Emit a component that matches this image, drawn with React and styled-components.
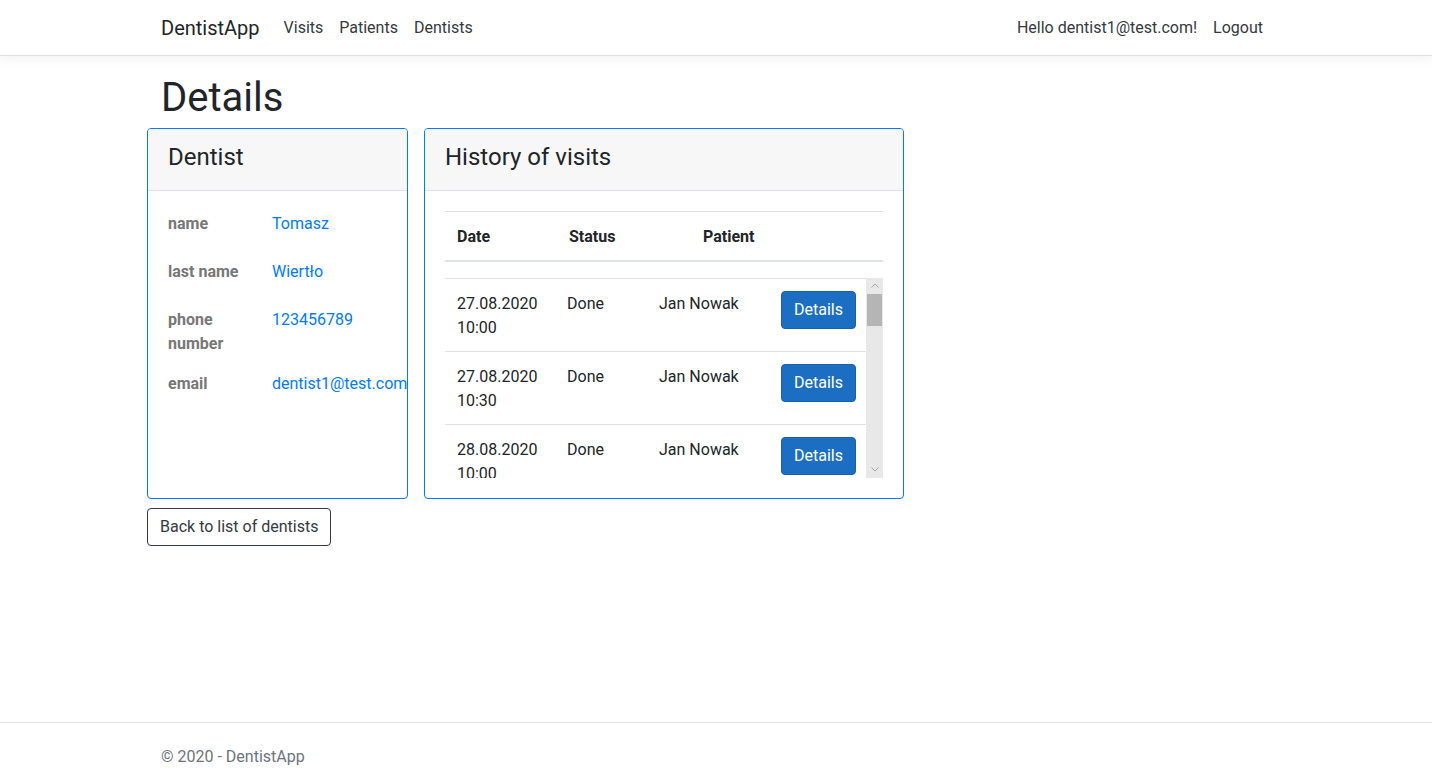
import React from 'react'
import styled, { createGlobalStyle } from 'styled-components'

const GlobalStyle = createGlobalStyle`
  html, body {
    margin: 0;
    padding: 0;
  }
  body {
    font-family: "Segoe UI", Roboto, "Noto Sans", sans-serif;
    font-size: 16px;
    line-height: 1.5;
    color: #212529;
    background: #ffffff;
  }
  * {
    box-sizing: border-box;
  }
`

const Page = styled.div`
  min-height: 100vh;
  display: flex;
  flex-direction: column;
`

const Navbar = styled.header`
  height: 56px;
  background: #ffffff;
  border-bottom: 1px solid #dee2e6;
  box-shadow: 0 4px 12px rgba(0, 0, 0, 0.05);
  margin-bottom: 16px;
`

const Container = styled.div`
  width: 1140px;
  margin: 0 auto;
  padding: 0 15px;
`

const NavInner = styled(Container)`
  height: 100%;
  display: flex;
  align-items: center;
`

const Brand = styled.a`
  font-size: 20px;
  line-height: 30px;
  color: #212529;
  margin-right: 16px;
  text-decoration: none;
`

const NavList = styled.nav`
  display: flex;
  align-items: center;
  margin-left: ${(p) => (p.right ? 'auto' : '0')};
`

const NavLink = styled.a`
  padding: 8px;
  color: #343a40;
  text-decoration: none;
  line-height: 24px;
`

const Hello = styled.span`
  padding: 8px;
  color: #343a40;
  line-height: 24px;
`

const Main = styled(Container)`
  padding-bottom: 16px;
`

const Title = styled.h1`
  font-size: 40px;
  font-weight: 400;
  line-height: 48px;
  margin: 0 0 8px;
  padding-top: 2px;
  height: 48px;
`

const CardRow = styled.div`
  display: flex;
  gap: 16px;
  margin: 0 -15px 0 -14px;
  align-items: stretch;
`

const Card = styled.section`
  width: ${(p) => p.width}px;
  border: 1px solid #007bff;
  border-radius: 4px;
  display: flex;
  flex-direction: column;
`

const CardHeader = styled.div`
  background: #f7f7f7;
  border-bottom: 1px solid #dee2e6;
  border-radius: 3px 3px 0 0;
  padding: 14px 20px 10px;
`

const CardTitle = styled.h4`
  font-size: 24px;
  font-weight: 400;
  line-height: 28.8px;
  margin: 0 0 8px;
`

const CardBody = styled.div`
  padding: 20px;
  flex: 1;
`

const InfoList = styled.dl`
  margin: 0;
`

const InfoRow = styled.div`
  display: grid;
  grid-template-columns: 104px 1fr;
  padding-top: 1px;
`

const Label = styled.dt`
  font-weight: 700;
  color: #777777;
  padding-right: 24px;
  margin-bottom: 15px;
`

const Value = styled.dd`
  margin: 0 0 7px;
  min-height: 40px;
  color: #007bff;
  white-space: nowrap;
`

const Table = styled.table`
  width: ${(p) => p.width}px;
  border-collapse: collapse;
  table-layout: fixed;
  margin-bottom: ${(p) => (p.head ? '16px' : '0')};
`

const Th = styled.th`
  text-align: left;
  font-weight: 700;
  padding: 13px 12px 11px;
  border-top: 1px solid #dee2e6;
  border-bottom: 2px solid #dee2e6;
  line-height: 24px;
`

const Td = styled.td`
  padding: 13px 12px 11px;
  vertical-align: top;
  border-top: 1px solid #dee2e6;
  line-height: 24px;
`

const ScrollArea = styled.div`
  display: flex;
  height: 200px;
`

const ScrollContent = styled.div`
  width: 421px;
  height: 200px;
  overflow: hidden;
`

const Scrollbar = styled.div`
  width: 17px;
  background: #e8e8e8;
  display: flex;
  flex-direction: column;
`

const ScrollArrow = styled.div`
  height: 16px;
  display: flex;
  align-items: center;
  justify-content: center;
`

const Thumb = styled.div`
  height: 32px;
  background: #b5b5b5;
  margin: 0 1px;
`

const Spacer = styled.div`
  flex: 1;
`

const PrimaryButton = styled.button`
  font-family: inherit;
  font-size: 16px;
  line-height: 24px;
  padding: 6px 12px;
  margin-top: -1px;
  color: #ffffff;
  background: #1b6ec2;
  border: 1px solid #1861ac;
  border-radius: 4px;
`

const OutlineButton = styled.button`
  font-family: inherit;
  font-size: 16px;
  line-height: 24px;
  padding: 6px 12px;
  color: #343a40;
  background: #ffffff;
  border: 1px solid #343a40;
  border-radius: 4px;
  margin: 9px -15px 0 -14px;
`

const Footer = styled.footer`
  margin-top: auto;
  border-top: 1px solid #dee2e6;
  line-height: 60px;
  height: 60px;
  padding-top: 4px;
  color: #6c757d;
`

const dentist = [
  ['name', 'Tomasz'],
  ['last name', 'Wiertło'],
  ['phone number', '123456789'],
  ['email', 'dentist1@test.com'],
]

const visits = [
  { date: '27.08.2020 10:00', status: 'Done', patient: 'Jan Nowak' },
  { date: '27.08.2020 10:30', status: 'Done', patient: 'Jan Nowak' },
  { date: '28.08.2020 10:00', status: 'Done', patient: 'Jan Nowak' },
]

const Chevron = ({ up }) => (
  <svg width="8" height="5" viewBox="0 0 8 5">
    <path
      d={up ? 'M0.5 4.5 L4 1 L7.5 4.5' : 'M0.5 0.5 L4 4 L7.5 0.5'}
      fill="none"
      stroke="#a3a3a3"
      strokeWidth="1"
    />
  </svg>
)

export default function App() {
  return (
    <Page>
      <GlobalStyle />
      <Navbar>
        <NavInner>
          <Brand href="#">DentistApp</Brand>
          <NavList>
            <NavLink href="#">Visits</NavLink>
            <NavLink href="#">Patients</NavLink>
            <NavLink href="#">Dentists</NavLink>
          </NavList>
          <NavList right>
            <Hello>Hello dentist1@test.com!</Hello>
            <NavLink href="#">Logout</NavLink>
          </NavList>
        </NavInner>
      </Navbar>
      <Main>
        <Title>Details</Title>
        <CardRow>
          <Card width={261}>
            <CardHeader>
              <CardTitle>Dentist</CardTitle>
            </CardHeader>
            <CardBody>
              <InfoList>
                {dentist.map(([label, value]) => (
                  <InfoRow key={label}>
                    <Label>{label}</Label>
                    <Value>{value}</Value>
                  </InfoRow>
                ))}
              </InfoList>
            </CardBody>
          </Card>
          <Card width={480}>
            <CardHeader>
              <CardTitle>History of visits</CardTitle>
            </CardHeader>
            <CardBody>
              <Table width={438} head>
                <colgroup>
                  <col style={{ width: 112 }} />
                  <col style={{ width: 134 }} />
                  <col style={{ width: 120 }} />
                  <col />
                </colgroup>
                <thead>
                  <tr>
                    <Th>Date</Th>
                    <Th>Status</Th>
                    <Th>Patient</Th>
                    <Th />
                  </tr>
                </thead>
              </Table>
              <ScrollArea>
                <ScrollContent>
                  <Table width={421}>
                    <colgroup>
                      <col style={{ width: 110 }} />
                      <col style={{ width: 92 }} />
                      <col style={{ width: 122 }} />
                      <col />
                    </colgroup>
                    <tbody>
                      {visits.map((v, i) => (
                        <tr key={i}>
                          <Td>{v.date}</Td>
                          <Td>{v.status}</Td>
                          <Td>{v.patient}</Td>
                          <Td>
                            <PrimaryButton>Details</PrimaryButton>
                          </Td>
                        </tr>
                      ))}
                    </tbody>
                  </Table>
                </ScrollContent>
                <Scrollbar>
                  <ScrollArrow>
                    <Chevron up />
                  </ScrollArrow>
                  <Thumb />
                  <Spacer />
                  <ScrollArrow>
                    <Chevron />
                  </ScrollArrow>
                </Scrollbar>
              </ScrollArea>
            </CardBody>
          </Card>
        </CardRow>
        <OutlineButton>Back to list of dentists</OutlineButton>
      </Main>
      <Footer>
        <Container>© 2020 - DentistApp</Container>
      </Footer>
    </Page>
  )
}
